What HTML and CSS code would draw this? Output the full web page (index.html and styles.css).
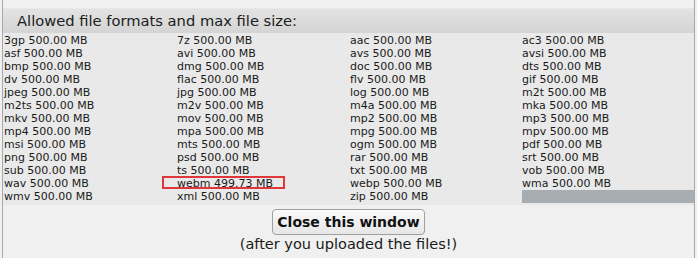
FILE: index.html
```html
<!DOCTYPE html>
<html>
<head>
<meta charset="utf-8">
<link rel="stylesheet" href="styles.css">
</head>
<body>
<div class="frame">
  <div class="header">Allowed file formats and max file size:</div>
  <div class="grid">
    <div class="cell">3gp 500.00 MB</div><div class="cell">7z 500.00 MB</div><div class="cell">aac 500.00 MB</div><div class="cell">ac3 500.00 MB</div>
    <div class="cell">asf 500.00 MB</div><div class="cell">avi 500.00 MB</div><div class="cell">avs 500.00 MB</div><div class="cell">avsi 500.00 MB</div>
    <div class="cell">bmp 500.00 MB</div><div class="cell">dmg 500.00 MB</div><div class="cell">doc 500.00 MB</div><div class="cell">dts 500.00 MB</div>
    <div class="cell">dv 500.00 MB</div><div class="cell">flac 500.00 MB</div><div class="cell">flv 500.00 MB</div><div class="cell">gif 500.00 MB</div>
    <div class="cell">jpeg 500.00 MB</div><div class="cell">jpg 500.00 MB</div><div class="cell">log 500.00 MB</div><div class="cell">m2t 500.00 MB</div>
    <div class="cell">m2ts 500.00 MB</div><div class="cell">m2v 500.00 MB</div><div class="cell">m4a 500.00 MB</div><div class="cell">mka 500.00 MB</div>
    <div class="cell">mkv 500.00 MB</div><div class="cell">mov 500.00 MB</div><div class="cell">mp2 500.00 MB</div><div class="cell">mp3 500.00 MB</div>
    <div class="cell">mp4 500.00 MB</div><div class="cell">mpa 500.00 MB</div><div class="cell">mpg 500.00 MB</div><div class="cell">mpv 500.00 MB</div>
    <div class="cell">msi 500.00 MB</div><div class="cell">mts 500.00 MB</div><div class="cell">ogm 500.00 MB</div><div class="cell">pdf 500.00 MB</div>
    <div class="cell">png 500.00 MB</div><div class="cell">psd 500.00 MB</div><div class="cell">rar 500.00 MB</div><div class="cell">srt 500.00 MB</div>
    <div class="cell">sub 500.00 MB</div><div class="cell">ts 500.00 MB</div><div class="cell">txt 500.00 MB</div><div class="cell">vob 500.00 MB</div>
    <div class="cell">wav 500.00 MB</div><div class="cell marked">webm 499.73 MB</div><div class="cell">webp 500.00 MB</div><div class="cell">wma 500.00 MB</div>
    <div class="cell">wmv 500.00 MB</div><div class="cell">xml 500.00 MB</div><div class="cell">zip 500.00 MB</div><div class="cell filler"></div>
  </div>
  <div class="footer">
    <button class="close">Close this window</button>
    <div class="note">(after you uploaded the files!)</div>
  </div>
</div>
</body>
</html>
```

FILE: styles.css
```css
html, body {
  margin: 0;
  padding: 0;
  background: #f0f0f0;
}
body {
  padding-left: 2px;
  width: 693px;
  height: 258px;
  overflow: hidden;
  font-family: "DejaVu Sans", Verdana, sans-serif;
  color: #1a1a1a;
}
.frame {
  border-left: 1px solid #a8a8a8;
  border-right: 1px solid #a8a8a8;
  height: 258px;
  padding-top: 8px;
  box-sizing: border-box;
}
.header {
  height: 24px;
  line-height: 23px;
  padding-left: 14px;
  font-size: 14.7px;
  color: #202020;
  background: linear-gradient(#e2e3e2, #d3d4d3);
  border-top: 1px solid #e8e8e8;
}
.grid {
  display: grid;
  grid-template-columns: 173px 173px 172px 1fr;
  background: #e9e9e9;
  padding: 1px 0 2px 1px;
}
.cell {
  height: 13px;
  line-height: 13px;
  font-size: 11px;
  white-space: nowrap;
}
.marked {
  position: relative;
}
.marked::after {
  content: "";
  position: absolute;
  left: -15px;
  top: -1px;
  width: 123px;
  height: 13px;
  border: 2px solid #e0383a;
  box-sizing: border-box;
}
.filler {
  background: #a8adb2;
}
.footer {
  display: flex;
  flex-direction: column;
  align-items: center;
  padding-top: 4px;
}
.close {
  font-family: "DejaVu Sans", Verdana, sans-serif;
  font-weight: bold;
  font-size: 14px;
  color: #111;
  padding: 0 4px;
  height: 26px;
  border: 1px solid #a0a0a0;
  border-radius: 4px;
  background: linear-gradient(#fafafa, #e6e6e6);
}
.note {
  font-size: 14.5px;
  margin-top: 1px;
  color: #1a1a1a;
}
```
